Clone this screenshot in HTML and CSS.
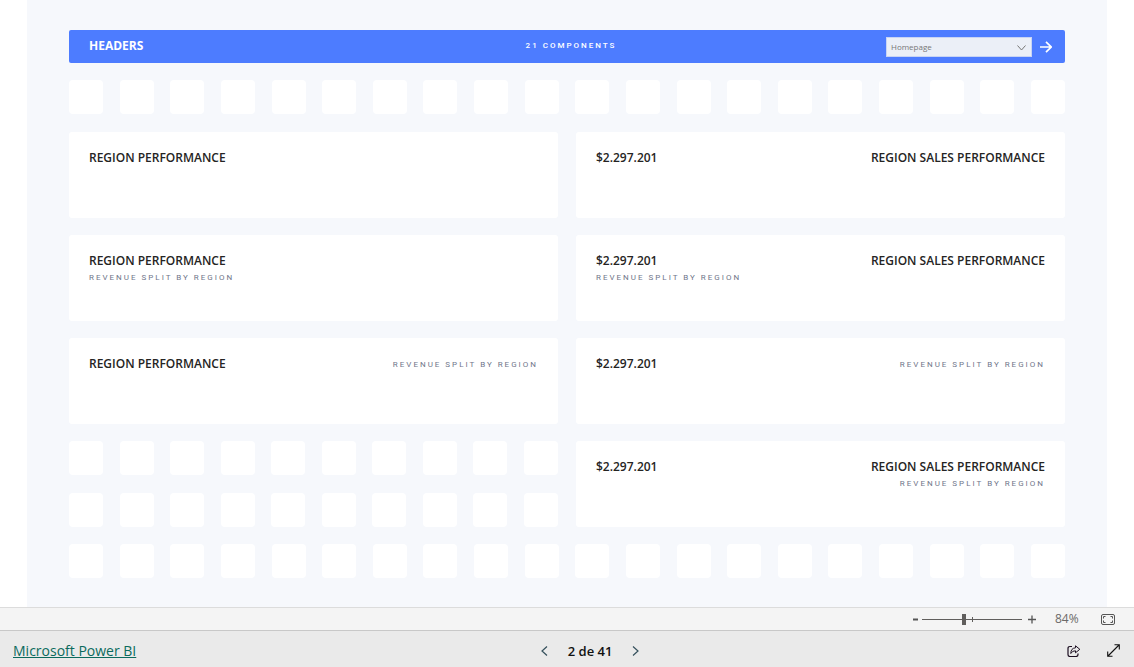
FILE: index.html
```html
<!DOCTYPE html>
<html lang="es">
<head>
<meta charset="utf-8">
<meta name="viewport" content="width=device-width, initial-scale=1">
<title>Microsoft Power BI</title>
<link rel="stylesheet" href="styles.css">
</head>
<body>
<main class="report">
  <header class="banner">
    <h1 class="banner-title">HEADERS</h1>
    <p class="banner-count">21 COMPONENTS</p>
    <div class="banner-nav">
      <div class="picker">
        <select class="picker-select" aria-label="Page"><option>Homepage</option></select>
        <svg class="picker-arrow" width="9" height="6" viewBox="0 0 9 6" aria-hidden="true"><path d="M.5.5l4 4.5 4-4.5" fill="none" stroke="#777" stroke-width="1"/></svg>
      </div>
      <button class="go" aria-label="Go to page"><svg width="12" height="12" viewBox="0 0 12 12" aria-hidden="true"><path d="M0 6h11M6 .8L11.2 6 6 11.2" fill="none" stroke="#fff" stroke-width="1.7"/></svg></button>
    </div>
  </header>

  <div class="tiles"><i></i><i></i><i></i><i></i><i></i><i></i><i></i><i></i><i></i><i></i><i></i><i></i><i></i><i></i><i></i><i></i><i></i><i></i><i></i><i></i></div>

  <div class="cards">
    <section class="card"><h2>REGION PERFORMANCE</h2></section>
    <section class="card"><h2>$2.297.201</h2><h2>REGION SALES PERFORMANCE</h2></section>
    <section class="card"><div><h2>REGION PERFORMANCE</h2><p class="sub">REVENUE SPLIT BY REGION</p></div></section>
    <section class="card"><div><h2>$2.297.201</h2><p class="sub">REVENUE SPLIT BY REGION</p></div><h2>REGION SALES PERFORMANCE</h2></section>
    <section class="card"><h2>REGION PERFORMANCE</h2><p class="sub sub-inline">REVENUE SPLIT BY REGION</p></section>
    <section class="card"><h2>$2.297.201</h2><p class="sub sub-inline">REVENUE SPLIT BY REGION</p></section>
    <div class="tile-stack">
      <div class="tiles"><i></i><i></i><i></i><i></i><i></i><i></i><i></i><i></i><i></i><i></i></div>
      <div class="tiles"><i></i><i></i><i></i><i></i><i></i><i></i><i></i><i></i><i></i><i></i></div>
    </div>
    <section class="card"><h2>$2.297.201</h2><div class="right"><h2>REGION SALES PERFORMANCE</h2><p class="sub">REVENUE SPLIT BY REGION</p></div></section>
  </div>

  <div class="tiles"><i></i><i></i><i></i><i></i><i></i><i></i><i></i><i></i><i></i><i></i><i></i><i></i><i></i><i></i><i></i><i></i><i></i><i></i><i></i><i></i></div>
</main>

<div class="zoombar">
  <button class="zoom-step" aria-label="Zoom out"><svg width="5" height="9" viewBox="0 0 5 9" aria-hidden="true"><path d="M0 4.5h5" stroke="#555" stroke-width="2"/></svg></button>
  <div class="slider"><input class="zoom-range" type="range" min="0" max="100" value="42" aria-label="Zoom"></div>
  <button class="zoom-step" aria-label="Zoom in"><svg width="8" height="9" viewBox="0 0 8 9" aria-hidden="true"><path d="M0 4.5h8M4 .5v8" stroke="#555" stroke-width="1.3"/></svg></button>
  <span class="zoom-value">84%</span>
  <button class="fit" aria-label="Fit to page"><svg width="14" height="11" viewBox="0 0 14 11" fill="none" stroke="#555" aria-hidden="true"><rect x=".5" y=".5" width="13" height="10" rx="1.5"/><path d="M2.500 4.500v-2H4.500M9.500 2.500h2v2M11.500 6.500v2H9.500M4.500 8.500H2.500v-2"/></svg></button>
</div>

<footer class="footer">
  <a class="brand" href="#">Microsoft Power BI</a>
  <nav class="pager" aria-label="Pages">
    <button aria-label="Previous page"><svg width="7" height="10" viewBox="0 0 7 10" aria-hidden="true"><path d="M6 .5L1 5l5 4.500" fill="none" stroke="#35505c" stroke-width="1.2"/></svg></button>
    <span>2 de 41</span>
    <button aria-label="Next page"><svg width="7" height="10" viewBox="0 0 7 10" aria-hidden="true"><path d="M1 .5L6 5 1 9.500" fill="none" stroke="#35505c" stroke-width="1.2"/></svg></button>
  </nav>
  <div class="actions">
    <button aria-label="Share"><svg width="14" height="12" viewBox="0 0 14 12" fill="none" stroke="#1b0d20" aria-hidden="true"><path d="M5 1.500H3Q1 1.500 1 3.500V9.500Q1 11.500 3 11.500H9Q11 11.500 11 9.500V8.500" stroke-width="1.2"/><path d="M8.500.8L12.800 4.300 8.500 7.800V5.800Q5.500 5.500 3.800 8.500 3.800 3.200 8.500 2.800Z" stroke-linejoin="round"/></svg></button>
    <button aria-label="Full screen"><svg width="13" height="13" viewBox="0 0 13 13" fill="none" stroke="#111" stroke-width="1.1" aria-hidden="true"><path d="M1 12L12 1M7.500.7h4.800v4.800M.7 7.500v4.800h4.800"/></svg></button>
  </div>
</footer>
</body>
</html>
```

FILE: styles.css
```css
* { box-sizing: border-box; }

body {
  margin: 0;
  min-height: 100vh;
  display: flex;
  flex-direction: column;
  background: #fff;
  color: #252423;
  font-family: "Open Sans", "Noto Sans", sans-serif;
}

h1, h2, p { margin: 0; }

button {
  display: flex;
  align-items: center;
  justify-content: center;
  padding: 0;
  border: 0;
  background: none;
  cursor: pointer;
}

.report {
  flex: 1;
  display: flex;
  flex-direction: column;
  gap: 17px;
  margin: 0 27px;
  padding: 30px 42px 28px;
  background: #f6f8fc;
}

.banner {
  display: grid;
  grid-template-columns: 1fr auto 1fr;
  align-items: center;
  height: 33px;
  padding: 0 12px 2px 20px;
  border-radius: 2px;
  background: #4d7cff;
  color: #fff;
}

.banner-title { font-size: 12px; line-height: 16px; font-weight: 700; }

.banner-count {
  font: 500 8px/12px Roboto, sans-serif;
  letter-spacing: 2px;
}

.banner-nav {
  display: flex;
  align-items: center;
  justify-content: flex-end;
  gap: 7px;
  padding-top: 2px;
}

.picker { position: relative; width: 146px; }

.picker-select {
  appearance: none;
  display: block;
  width: 100%;
  height: 20px;
  padding: 0 4px;
  border: 1px solid #c8d4f4;
  border-radius: 0;
  background: #ebeff7;
  color: #777;
  font: 8px "Open Sans", sans-serif;
}

.picker-arrow {
  position: absolute;
  right: 6px;
  top: 8px;
  pointer-events: none;
}

.go { height: 20px; width: 14px; }

.tiles { display: flex; justify-content: space-between; }

.tiles i {
  width: 34px;
  height: 34px;
  border-radius: 4px;
  background: #fff;
}

.cards {
  display: grid;
  grid-template-columns: 1fr 1fr;
  gap: 17px 18px;
  padding-top: 1px;
}

.card {
  display: flex;
  align-items: flex-start;
  justify-content: space-between;
  min-height: 86px;
  padding: 17px 20px;
  border-radius: 3px;
  background: #fff;
}

.card h2 { font-size: 12px; line-height: 18px; font-weight: 600; }

.sub {
  color: #70768a;
  font: 8px/12px Roboto, sans-serif;
  letter-spacing: 2px;
  padding-top: 2px;
}

.sub-inline { padding-top: 4px; }

.right { text-align: right; }

.tile-stack {
  display: flex;
  flex-direction: column;
  justify-content: space-between;
}

.zoombar {
  display: flex;
  align-items: center;
  justify-content: flex-end;
  height: 24px;
  padding: 0 19px 0 0;
  border-top: 1px solid #dcdcdc;
  border-bottom: 1px solid #c8c8c8;
  background: #f4f4f4;
}

.zoom-step { height: 20px; }

.slider { position: relative; display: flex; width: 100px; margin: 0 6px 0 4px; }

.slider::before {
  content: "";
  position: absolute;
  left: 50%;
  top: 3px;
  width: 1px;
  height: 5px;
  background: #605e5c;
}

.zoom-range {
  appearance: none;
  width: 100%;
  height: 11px;
  margin: 0;
  background: linear-gradient(#605e5c, #605e5c) center / 100% 1px no-repeat;
}

.zoom-range::-webkit-slider-thumb {
  appearance: none;
  width: 4px;
  height: 11px;
  background: #605e5c;
}

.zoom-value {
  width: 65px;
  padding-left: 19px;
  color: #6c6a68;
  font-size: 12px;
  line-height: 18px;
}

.fit { height: 20px; }

.footer {
  display: flex;
  align-items: center;
  justify-content: space-between;
  height: 36px;
  padding: 3px 0 0 13px;
  background: #eaeaea;
}

.brand { color: #0b6a5d; font-size: 14px; line-height: 20px; }

.pager {
  display: flex;
  align-items: center;
  gap: 20px;
  color: #111;
  font-size: 13px;
  line-height: 20px;
  font-weight: 600;
}

.actions { display: flex; padding-left: 10px; }

.actions button { width: 40px; height: 32px; }
```
